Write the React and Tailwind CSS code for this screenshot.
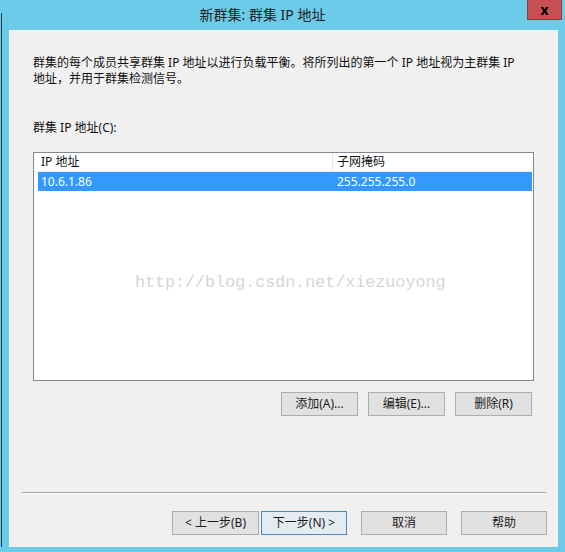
const ui = "'Noto Sans', 'Noto Sans CJK SC', sans-serif";

const Btn = ({ children, w, h = 'h-[24px]', primary = false }) => (
  <button
    className={`${w} ${h} flex items-center justify-center text-[12px] text-[#1a1a1a] border ${
      primary ? 'border-[#4a86c0] bg-[#e4ebf2]' : 'border-[#adadad] bg-[#e1e1e1]'
    }`}
    style={{ fontFamily: ui }}
  >
    {children}
  </button>
);

export default function App() {
  return (
    <div className="relative w-[565px] h-[552px] bg-[#6bcbe8] flex flex-col overflow-hidden" style={{ fontFamily: ui }}>
      {/* stray edge of the window behind */}
      <div className="absolute left-[1px] top-[13px] bottom-[5px] w-[1px] bg-[#1f3a4a]" />

      {/* Title bar */}
      <div className="h-[30px] shrink-0 flex items-center justify-center pr-[40px]">
        <span className="text-[14px] text-[#222] leading-none">新群集: 群集 IP 地址</span>
      </div>
      <button className="absolute top-0 right-[3px] w-[35px] h-[20px] bg-[#c75050] border border-[#8c3a3a] border-t-0 flex items-center justify-center text-[14px] font-bold text-black leading-none">
        x
      </button>

      {/* Content */}
      <div className="flex-1 ml-[9px] mr-[7px] mb-[5px] bg-[#f0f0f0] border-l border-[#f9f9f9] flex flex-col">
        <div className="pl-[23px] pt-[25px] text-[12px] leading-[16px] text-[#111]">
          <p>
            群集的每个成员共享群集 IP 地址以进行负载平衡。将所列出的第一个 IP 地址视为主群集 IP
            <br />
            地址，并用于群集检测信号。
          </p>
          <p className="mt-[33px]">群集 IP 地址(C):</p>

          {/* List view */}
          <div className="relative mt-[16px] w-[501px] h-[229px] bg-white border border-[#828790] flex flex-col">
            <div className="flex h-[19px] border-b border-[#f0f0f0] text-[12px] leading-[18px] text-[#111]">
              <div className="w-[299px] pl-[7px] border-r border-[#e5e5e5]">IP 地址</div>
              <div className="flex-1 pl-[4px]">子网掩码</div>
            </div>
            <div className="flex h-[19px] ml-[4px] mr-[1px] bg-[#3399ff] text-white text-[12px] leading-[19px]">
              <div className="w-[295px] pl-[3px]">10.6.1.86</div>
              <div className="flex-1 pl-[4px]">255.255.255.0</div>
            </div>
            <div
              className="absolute left-[101px] top-[122px] text-[16.7px] leading-none text-[#d6d6d6]"
              style={{ fontFamily: "'Liberation Mono', monospace" }}
            >
              http://blog.csdn.net/xiezuoyong
            </div>
          </div>

          <div className="w-[499px] mt-[11px] flex justify-end gap-[10px]">
            <Btn w="w-[77px]">添加(A)...</Btn>
            <Btn w="w-[77px]">编辑(E)...</Btn>
            <Btn w="w-[77px]">删除(R)</Btn>
          </div>
        </div>

        <div className="flex-1" />

        <div className="mx-[12px] h-[2px] border-t border-[#a0a0a0] border-b border-b-white" />

        <div className="mt-[17px] mb-[12px] pr-[11px] flex justify-end">
          <Btn w="w-[87px]">&lt; 上一步(B)</Btn>
          <div className="w-[2px]" />
          <Btn w="w-[86px]" primary>下一步(N) &gt;</Btn>
          <div className="w-[14px]" />
          <Btn w="w-[86px]">取消</Btn>
          <div className="w-[14px]" />
          <Btn w="w-[86px]">帮助</Btn>
        </div>
      </div>
    </div>
  );
}
